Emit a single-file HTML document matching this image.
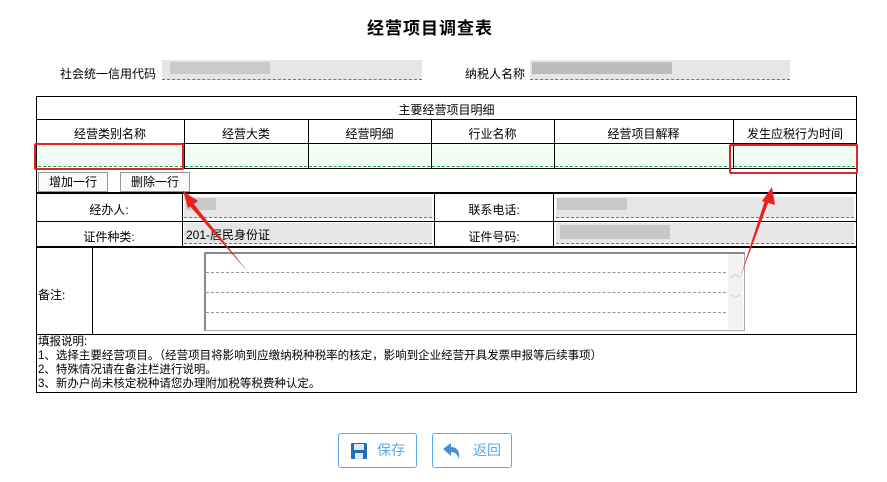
<!DOCTYPE html>
<html><head><meta charset="utf-8"><style>
body{margin:0;width:887px;height:482px;background:#fff;position:relative;overflow:hidden;font-family:"Liberation Sans","Noto Sans CJK SC",sans-serif;font-size:12px;color:#000}
.a{position:absolute}
.t{text-align:center}
.bl{background:#000}
.blur{background:#e6e6e6;border-bottom:1px dashed #777}
.g{background:#effdf5;border-bottom:1px dashed #2a9a55}
.btn{position:absolute;border:1px solid #999;background:#fafafa;text-align:center;line-height:18px;font-size:12px}
.bb{position:absolute;border:1px solid #5aa8e8;border-radius:3px;background:#fff;color:#5aa8e8;font-size:14px;line-height:32px}
</style></head><body>
<div class="a t" style="left:0;width:860px;top:14px;font-size:17px;font-weight:bold;letter-spacing:1px">经营项目调查表</div>

<div class="a" style="left:60px;top:65px">社会统一信用代码</div>
<div class="a blur" style="left:162px;top:60px;width:260px;height:19px"></div>
<div class="a" style="left:170px;top:62px;width:100px;height:12px;background:#bdbdbd;opacity:.7"></div>
<div class="a" style="left:465px;top:65px">纳税人名称</div>
<div class="a blur" style="left:530px;top:60px;width:260px;height:19px"></div>
<div class="a" style="left:532px;top:62px;width:140px;height:12px;background:#a8a8a8;opacity:.7"></div>

<div class="a" style="left:36px;top:96px;width:819px;height:295px;border:1px solid #000"></div>
<div class="a t" style="left:36px;width:821px;top:101px">主要经营项目明细</div>
<div class="a bl" style="left:36px;top:119px;width:821px;height:1px"></div>
<div class="a bl" style="left:36px;top:143px;width:821px;height:1px"></div>
<div class="a bl" style="left:36px;top:168px;width:821px;height:1px"></div>
<div class="a t" style="left:36px;width:148px;top:125px">经营类别名称</div>
<div class="a t" style="left:184px;width:124px;top:125px">经营大类</div>
<div class="a t" style="left:308px;width:123px;top:125px">经营明细</div>
<div class="a t" style="left:431px;width:123px;top:125px">行业名称</div>
<div class="a t" style="left:554px;width:179px;top:125px">经营项目解释</div>
<div class="a t" style="left:733px;width:124px;top:125px">发生应税行为时间</div>
<div class="a g" style="left:38px;top:146px;width:145px;height:20px"></div>
<div class="a g" style="left:185px;top:146px;width:122px;height:20px"></div>
<div class="a g" style="left:309px;top:146px;width:121px;height:20px"></div>
<div class="a g" style="left:432px;top:146px;width:121px;height:20px"></div>
<div class="a g" style="left:555px;top:146px;width:177px;height:20px"></div>
<div class="a g" style="left:734px;top:146px;width:121px;height:20px"></div>
<div class="a bl" style="left:184px;top:119px;width:1px;height:50px"></div>
<div class="a bl" style="left:308px;top:119px;width:1px;height:50px"></div>
<div class="a bl" style="left:431px;top:119px;width:1px;height:50px"></div>
<div class="a bl" style="left:554px;top:119px;width:1px;height:50px"></div>
<div class="a bl" style="left:733px;top:119px;width:1px;height:50px"></div>
<div class="a" style="left:34px;top:143px;width:146px;height:23px;border:2px solid #e82020;border-radius:2px"></div>
<div class="a" style="left:729px;top:144px;width:125px;height:26px;border:2px solid #e82020;border-radius:2px"></div>
<div class="btn" style="left:38px;top:172px;width:68px;height:18px">增加一行</div>
<div class="btn" style="left:120px;top:172px;width:68px;height:18px">删除一行</div>
<div class="a bl" style="left:36px;top:192px;width:821px;height:2px"></div>

<div class="a bl" style="left:36px;top:221px;width:821px;height:1px"></div>
<div class="a bl" style="left:36px;top:246px;width:821px;height:2px"></div>
<div class="a bl" style="left:182px;top:194px;width:1px;height:53px"></div>
<div class="a bl" style="left:434px;top:194px;width:1px;height:53px"></div>
<div class="a bl" style="left:553px;top:194px;width:1px;height:53px"></div>
<div class="a t" style="left:36px;width:146px;top:201px">经办人:</div>
<div class="a t" style="left:36px;width:146px;top:228px">证件种类:</div>
<div class="a t" style="left:435px;width:118px;top:201px">联系电话:</div>
<div class="a t" style="left:435px;width:118px;top:228px">证件号码:</div>
<div class="a blur" style="left:184px;top:197px;width:248px;height:20px"></div>
<div class="a blur" style="left:184px;top:223px;width:248px;height:20px"></div>
<div class="a blur" style="left:556px;top:197px;width:298px;height:20px"></div>
<div class="a blur" style="left:556px;top:223px;width:298px;height:20px"></div>
<div class="a" style="left:186px;top:198px;width:30px;height:12px;background:#bbb;opacity:.7"></div>
<div class="a" style="left:557px;top:198px;width:70px;height:12px;background:#bbb;opacity:.7"></div>
<div class="a" style="left:560px;top:225px;width:110px;height:14px;background:#bbb;opacity:.7"></div>
<div class="a" style="left:186px;top:226px">201-居民身份证</div>

<div class="a bl" style="left:92px;top:248px;width:1px;height:86px"></div>
<div class="a" style="left:38px;top:286px">备注:</div>
<div class="a" style="left:204px;top:252px;width:538px;height:76px;border:1px solid #aaa;border-top:2px solid #888;border-left:2px solid #888"></div>
<div class="a" style="left:206px;top:272px;width:520px;border-top:1px dashed #999"></div>
<div class="a" style="left:206px;top:292px;width:520px;border-top:1px dashed #999"></div>
<div class="a" style="left:206px;top:312px;width:520px;border-top:1px dashed #999"></div>
<div class="a" style="left:728px;top:254px;width:15px;height:75px;background:#f2f2f2;color:#bbb;font-size:10px;text-align:center;line-height:26px;padding-top:8px;box-sizing:border-box">︿<br>﹀</div>
<div class="a bl" style="left:36px;top:334px;width:821px;height:1px"></div>
<div class="a" style="left:38px;top:335px;line-height:14px;font-size:11.5px">填报说明:<br>1、选择主要经营项目。（经营项目将影响到应缴纳税种税率的核定，影响到企业经营开具发票申报等后续事项）<br>2、特殊情况请在备注栏进行说明。<br>3、新办户尚未核定税种请您办理附加税等税费种认定。</div>

<svg class="a" style="left:0;top:0" width="887" height="482">
<polygon points="248,272 193,203 189,205" fill="#e82020"/>
<polygon points="183,191 198,201 188,208" fill="#e82020"/>
<polygon points="740,278 770,198 766,197" fill="#e82020"/>
<polygon points="772,187 775,205 762,201" fill="#e82020"/>
</svg>

<div class="bb" style="left:338px;top:433px;width:77px;height:33px">
<svg class="a" style="left:12px;top:9px" width="16" height="16" viewBox="0 0 16 16"><rect x="0" y="0" width="16" height="16" rx="1" fill="#1e6fb8"/><rect x="3" y="1" width="10" height="6" fill="#dfe9f3"/><rect x="4" y="10" width="8" height="6" fill="#dfe9f3"/></svg>
<span class="a" style="left:38px;top:0">保存</span></div>
<div class="bb" style="left:432px;top:433px;width:78px;height:33px">
<svg class="a" style="left:10px;top:9px" width="18" height="16" viewBox="0 0 18 16"><path d="M0 6 L8 0 L8 4 C14 4 17 8 16 16 C14 11 12 9 8 9 L8 13 Z" fill="#4a8fd6"/></svg>
<span class="a" style="left:40px;top:0">返回</span></div>
</body></html>
